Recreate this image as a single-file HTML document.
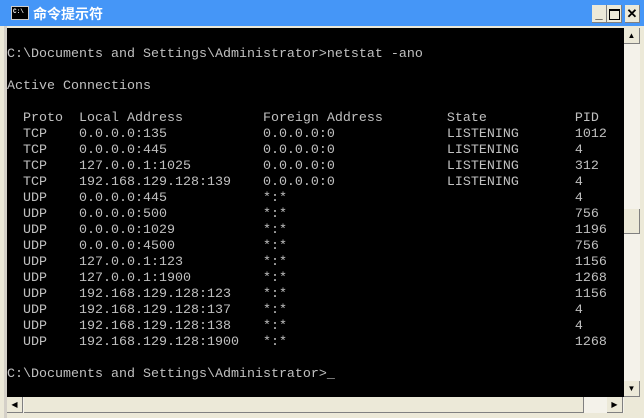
<!DOCTYPE html>
<html><head><meta charset="utf-8"><style>
body{margin:0;width:644px;height:418px;overflow:hidden;background:#ece9d8;position:relative;font-family:"Liberation Sans",sans-serif}
.t{position:absolute;left:0;top:0;width:644px;height:26px;background:#4596f7}
.tt{position:absolute;left:33px;top:4px;color:#fff;font:bold 14px "Liberation Sans","Noto Sans CJK SC",sans-serif}
.ic{position:absolute;left:11px;top:6px;width:16px;height:12px;background:#000;border:1px solid #ccc;color:#fff;font:bold 6px "Liberation Mono",monospace;line-height:10px;text-indent:1px}
.b{position:absolute;top:5px;width:15px;height:18px;background:#ece9d8;border-right:1px solid #808080;border-bottom:1px solid #808080;box-sizing:border-box;font:bold 13px "Liberation Sans",sans-serif;text-align:center;line-height:17px}
.con{position:absolute;left:7px;top:28px;width:617px;height:369px;background:#000;overflow:hidden}
pre{margin:0;color:#c0c0c0;font:13.33px/16px "Liberation Mono",monospace;position:absolute;left:0;top:3px}
.vs{position:absolute;left:624px;top:28px;width:16px;height:369px;background:#f4f2ea}
.hs{position:absolute;left:7px;top:397px;width:617px;height:16px;background:#f4f2ea}
.btn{position:absolute;width:16px;height:16px;background:#ece9d8;border-right:1px solid #808080;border-bottom:1px solid #808080;box-sizing:border-box}
.edge{position:absolute;left:4px;top:26px;width:3px;height:392px;background:#d4d0c8}
</style></head><body>
<div class="t"><div class="ic">C:\</div><div class="tt">命令提示符</div>
<div class="b" style="left:592px">_</div>
<div class="b" style="left:607px"><div style="margin:4px 2px;width:9px;height:8px;border:1px solid #000;border-top-width:2px"></div></div>
<div class="b" style="left:625px">✕</div></div>
<div class="edge"></div>
<div class="con"><pre>

C:\Documents and Settings\Administrator&gt;netstat -ano

Active Connections

  Proto  Local Address          Foreign Address        State           PID
  TCP    0.0.0.0:135            0.0.0.0:0              LISTENING       1012
  TCP    0.0.0.0:445            0.0.0.0:0              LISTENING       4
  TCP    127.0.0.1:1025         0.0.0.0:0              LISTENING       312
  TCP    192.168.129.128:139    0.0.0.0:0              LISTENING       4
  UDP    0.0.0.0:445            *:*                                    4
  UDP    0.0.0.0:500            *:*                                    756
  UDP    0.0.0.0:1029           *:*                                    1196
  UDP    0.0.0.0:4500           *:*                                    756
  UDP    127.0.0.1:123          *:*                                    1156
  UDP    127.0.0.1:1900         *:*                                    1268
  UDP    192.168.129.128:123    *:*                                    1156
  UDP    192.168.129.128:137    *:*                                    4
  UDP    192.168.129.128:138    *:*                                    4
  UDP    192.168.129.128:1900   *:*                                    1268

C:\Documents and Settings\Administrator&gt;_</pre></div>
<div class="vs">
<div class="btn" style="left:0;top:0;font-size:8px;text-align:center;line-height:15px">▲</div>
<div class="btn" style="left:0;top:181px;height:25px"></div>
<div class="btn" style="left:0;top:353px;font-size:8px;text-align:center;line-height:15px">▼</div>
</div>
<div class="hs">
<div class="btn" style="left:0;top:0;font-size:8px;text-align:center;line-height:15px">◀</div>
<div class="btn" style="left:17px;top:0;width:560px"></div>
<div class="btn" style="left:600px;top:0;font-size:8px;text-align:center;line-height:15px">▶</div>
</div>
</body></html>
